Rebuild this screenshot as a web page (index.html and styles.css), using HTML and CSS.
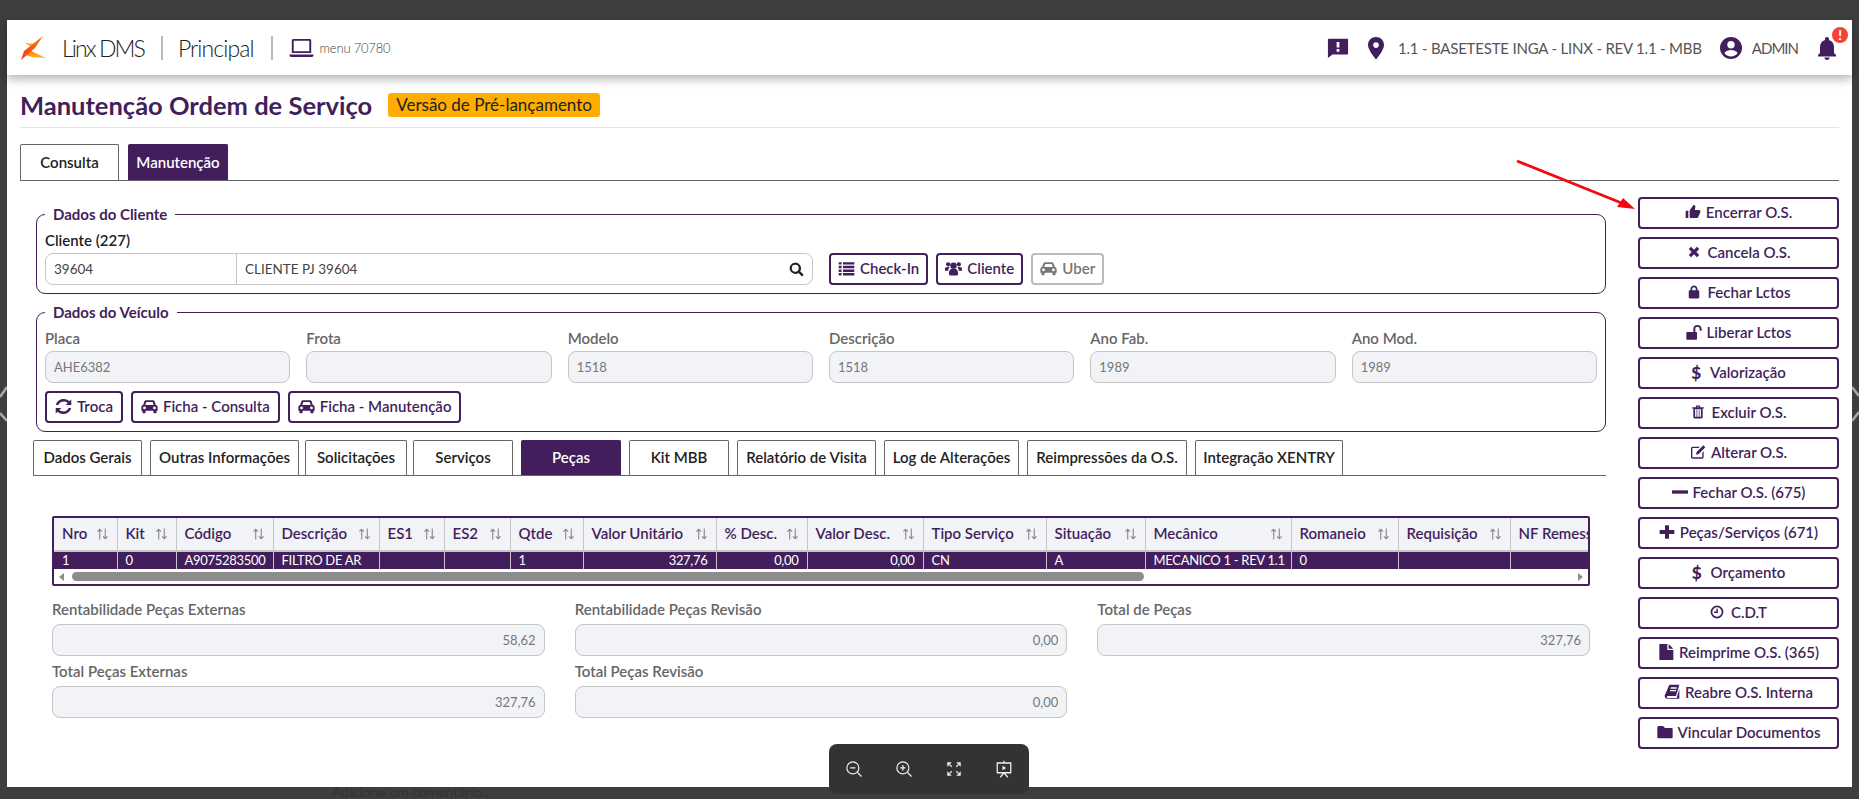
FILE: index.html
```html
<!DOCTYPE html>
<html lang="pt-BR">
  <head>
    <meta charset="UTF-8" />
    <title>Manutenção Ordem de Serviço</title>
    <link rel="stylesheet" href="styles.css">
  </head>
  <body>
    <svg class="sprite" xmlns="http://www.w3.org/2000/svg">
      <symbol id="i-thumb" viewBox="0 0 24 24"><path d="M1 21h4V10H1v11zm22-10c0-1.1-.9-2-2-2h-6.3l.9-4.6c.2-1.300-.9-2.900-2.600-3.400L7.600 8.600C7.200 9 7 9.500 7 10v9c0 1.100.9 2 2 2h9c.8 0 1.500-.5 1.800-1.200l3-7c.1-.3.2-.5.2-.8v-1z"/></symbol>
      <symbol id="i-close" viewBox="0 0 24 24"><path d="M7 3l5 5 5-5 4 4-5 5 5 5-4 4-5-5-5 5-4-4 5-5-5-5z"/></symbol>
      <symbol id="i-lock" viewBox="0 0 24 24"><path d="M19 9h-1V7c0-3.300-2.700-6-6-6S6 3.700 6 7v2H5c-1.100 0-2 .9-2 2v10c0 1.100.9 2 2 2h14c1.100 0 2-.9 2-2V11c0-1.100-.9-2-2-2zM9 7c0-1.700 1.300-3 3-3s3 1.300 3 3v2H9V7z"/></symbol>
      <symbol id="i-unlock" viewBox="0 0 24 24"><path d="M2 12h13c.8 0 1.500.7 1.500 1.500V22c0 .8-.7 1.500-1.500 1.500H2c-.8 0-1.500-.7-1.500-1.500v-8.500C.5 12.700 1.200 12 2 12zM11 12V7.500C11 4 13.500 1.500 17 1.500S23.500 4 23.500 7.500V10h-3V7.500c0-2-1.500-3.200-3.500-3.200S14 5.500 14 7.500V12z"/></symbol>
      <symbol id="i-trash" viewBox="0 0 24 24"><path d="M9 1h6l1 3h6v2h-2v15c0 1.100-.9 2-2 2H6c-1.100 0-2-.9-2-2V6H2V4h6l1-3zm1.500 2l-.4 1h3.800l-.4-1h-3zM7 7v13h2.500V7H7zm3.700 0v13h2.600V7h-2.600zm3.800 0v13H17V7h-2.500z" fill-rule="evenodd"/></symbol>
      <symbol id="i-edit" viewBox="0 0 24 24"><path d="M4 4h11l-2 2H4.500C4 6 3.500 6.500 3.500 7v12c0 .5.5 1 1 1h13c.5 0 1-.5 1-1v-6l2-2v8.500c0 1.400-1.100 2.500-2.500 2.500H4c-1.400 0-2.500-1.100-2.500-2.500v-13C1.500 5.100 2.600 4 4 4z"/><path d="M20 2l3 3-10 10-4 1 1-4z"/></symbol>
      <symbol id="i-minus" viewBox="0 0 24 24"><path d="M0 9.500h24v5H0z"/></symbol>
      <symbol id="i-plus" viewBox="0 0 24 24"><path d="M9 2h6v7h8v6h-8v7H9v-7H1V9h8z"/></symbol>
      <symbol id="i-clock" viewBox="0 0 24 24"><path d="M12 1a11 11 0 1 0 0 22 11 11 0 0 0 0-22zm0 3a8 8 0 1 1 0 16 8 8 0 0 1 0-16z" fill-rule="evenodd"/><path d="M11 6.500h2.500v7H7v-2.500h4z"/></symbol>
      <symbol id="i-file" viewBox="0 0 24 24"><path d="M2 0h12v9h9v15H2zM16 0l7 7h-7z"/></symbol>
      <symbol id="i-book" viewBox="0 0 24 24"><path d="M8 1h15l-5 17H6c-1 0-1.800.8-1.800 1.600S5 21 6 21h13l4-14v15H5c-2.500 0-4-1.700-4-3.500 0-.5 0-1 .2-1.500zm2 4v2h9V5zm-1 4v2h9V9z" fill-rule="evenodd"/></symbol>
      <symbol id="i-folder" viewBox="0 0 24 24"><path d="M3 3h6l3 3h10c.8 0 1.500.7 1.500 1.500V20c0 .8-.7 1.500-1.500 1.500H2C1.200 21.500.5 20.800.5 20V5.500C.5 4 1.500 3 3 3z"/></symbol>
      <symbol id="i-list" viewBox="0 0 24 24"><path d="M1 3h4v3.500H1zm6 0h16v3.500H7zM1 8.200h4v3.500H1zm6 0h16v3.500H7zm-6 5.200h4v3.500H1zm6 0h16v3.500H7zM1 18.500h4V22H1zm6 0h16V22H7z"/></symbol>
      <symbol id="i-users" viewBox="0 0 24 24"><circle cx="12" cy="8" r="4.500"/><circle cx="4.500" cy="6" r="3"/><circle cx="19.500" cy="6" r="3"/><path d="M7 14c1-1 3-1.500 5-1.500s4 .5 5 1.500c1 1 1.500 3 1.500 5 0 1.500-1 3-2.500 3H8c-1.500 0-2.500-1.500-2.500-3 0-2 .5-4 1.500-5zM5 10C3 10 .5 10 0 12v3h4.500c.2-2 1-4 2-5zM19 10c2 0 4.500 0 5 2v3h-4.500c-.2-2-1-4-2-5z"/></symbol>
      <symbol id="i-car" viewBox="0 0 24 24"><path d="M7 3h10c1 0 1.800.6 2.200 1.500L21 10c1.500.5 2.500 1.700 2.500 3.200V18h-1.500v2c0 .8-.7 1.500-1.500 1.500H19c-.8 0-1.500-.7-1.500-1.500v-2h-11v2c0 .8-.7 1.500-1.500 1.500H3.500C2.700 21.500 2 20.800 2 20v-2H.5v-4.800C.5 11.700 1.500 10.500 3 10l1.800-5.500C5.200 3.600 6 3 7 3zm.5 2.500L6 10h12l-1.500-4.500zM5 12a2 2 0 1 0 0 4 2 2 0 0 0 0-4zm14 0a2 2 0 1 0 0 4 2 2 0 0 0 0-4z" fill-rule="evenodd"/></symbol>
      <symbol id="i-refresh" viewBox="0 0 24 24"><path d="M23 2v8h-8l3-3c-1.600-1.400-3.700-2-6-2-3.300 0-6 2-7.200 5H1.200C2.500 5 6.800 1.500 12 1.500c3.200 0 6 1.100 8.300 3.200zM1 22v-8h8l-3 3c1.600 1.400 3.700 2 6 2 3.300 0 6-2 7.200-5h3.600c-1.300 5-5.600 8.500-10.800 8.500-3.200 0-6-1.100-8.300-3.200z"/></symbol>
      <symbol id="i-search" viewBox="0 0 24 24"><path d="M10 1a9 9 0 1 0 5.200 16.400l5.600 5.600 2.700-2.700-5.600-5.600A9 9 0 0 0 10 1zm0 3.500a5.500 5.500 0 1 1 0 11 5.500 5.500 0 0 1 0-11z" fill-rule="evenodd"/></symbol>
      <symbol id="i-alert" viewBox="0 0 24 24"><path d="M2 2h20c.6 0 1 .4 1 1v15c0 .6-.4 1-1 1H6l-5 4V3c0-.6.4-1 1-1zm8.500 3.500v6h3v-6zm0 7.500v3h3v-3z" fill-rule="evenodd"/></symbol>
      <symbol id="i-pin" viewBox="0 0 24 24"><path d="M12 1C7.500 1 4 4.500 4 9c0 5.500 8 14.500 8 14.500S20 14.500 20 9c0-4.500-3.500-8-8-8zm0 5.300a2.800 2.800 0 1 1 0 5.600 2.800 2.800 0 0 1 0-5.600z" fill-rule="evenodd"/></symbol>
      <symbol id="i-user" viewBox="0 0 24 24"><path d="M12 1a11 11 0 1 0 0 22 11 11 0 0 0 0-22zm0 4a3.700 3.700 0 1 1 0 7.400A3.700 3.700 0 0 1 12 5zm0 15.500c-2.800 0-5.200-1.300-6.700-3.400 1.300-2 4.200-3 6.700-3s5.400 1 6.700 3c-1.500 2.100-3.900 3.400-6.700 3.400z" fill-rule="evenodd"/></symbol>
      <symbol id="i-bell" viewBox="0 0 24 24"><path d="M12 24c1.500 0 2.600-1.100 2.600-2.400H9.400C9.400 22.900 10.500 24 12 24zm7-7v-6c0-3.600-1.900-6.200-5-7V3c0-1.200-.8-2-2-2s-2 .8-2 2v1c-3.100.8-5 3.400-5 7v6l-2 2v1.500h18V19z"/></symbol>
      <symbol id="i-laptop" viewBox="0 0 24 24"><path d="M4 3h16c1 0 1.700.7 1.700 1.700V17H2.300V4.700C2.300 3.700 3 3 4 3zm.2 1.800v10.400h15.600V4.800zM0 18.500h24v.8c0 1-.7 1.700-1.700 1.700H1.700C.7 21 0 20.300 0 19.300z" fill-rule="evenodd"/></symbol>
      <symbol id="i-sort" viewBox="0 0 14 14"><path d="M4 13V2M1.500 4.500L4 2l2.500 2.500M10 1v11M7.500 9.500L10 12l2.500-2.500" fill="none" stroke="currentColor" stroke-width="1.200"/></symbol>
      <symbol id="i-zoomout" viewBox="0 0 24 24"><circle cx="10.500" cy="10.500" r="8" fill="none" stroke="currentColor" stroke-width="1.600"/><path d="M16.500 16.500L22 22M7 10.500h7" fill="none" stroke="currentColor" stroke-width="1.800"/></symbol>
      <symbol id="i-zoomin" viewBox="0 0 24 24"><circle cx="10.500" cy="10.500" r="8" fill="none" stroke="currentColor" stroke-width="1.600"/><path d="M16.500 16.500L22 22M7 10.500h7M10.500 7v7" fill="none" stroke="currentColor" stroke-width="1.800"/></symbol>
      <symbol id="i-expand" viewBox="0 0 24 24"><path d="M3 3h6L3 9zM21 3h-6l6 6zM3 21h6l-6-6zM21 21h-6l6-6z" fill="currentColor"/><path d="M6 6l3 3M18 6l-3 3M6 18l3-3M18 18l-3-3" stroke="currentColor" stroke-width="1.500"/></symbol>
      <symbol id="i-slides" viewBox="0 0 24 24"><path d="M3 4h18v13H3zM12 1v3M12 17l-5 6M12 17l5 6" fill="none" stroke="currentColor" stroke-width="1.700"/><path d="M10 7.500l5 3-5 3z" fill="currentColor"/></symbol>
    </svg>

    <div class="panel">
      <header class="topbar">
        <svg class="logo" viewBox="0 0 26 24">
          <defs>
            <linearGradient id="logo-fill" x1="0" y1="1" x2="1" y2="0"><stop offset="0" stop-color="#f03a17"/><stop offset="1" stop-color="#ff7a10"/></linearGradient>
            <linearGradient id="logo-foot" x1="0" y1="0" x2="1" y2="1"><stop offset="0" stop-color="#ff7a10"/><stop offset="1" stop-color="#ffc31f"/></linearGradient>
          </defs>
          <path fill="#ffae1c" d="M5 7l12 1-4 4z"/>
          <path fill="url(#logo-foot)" d="M9 14l17 8-13-.8-8-2.200z"/>
          <path fill="url(#logo-fill)" d="M23 0L15 12 1 24l3-9z"/>
        </svg>
        <span class="brand linx">Linx DMS</span>
        <span class="brand-sep"></span>
        <span class="brand">Principal</span>
        <span class="brand-sep"></span>
        <svg class="laptop"><use href="#i-laptop"/></svg>
        <span class="menu-code">menu 70780</span>
        <div class="topbar-right">
          <svg class="top-icon alert-icon"><use href="#i-alert"/></svg>
          <svg class="top-icon pin-icon"><use href="#i-pin"/></svg>
          <span class="base-name">1.1 - BASETESTE INGA - LINX - REV 1.1 - MBB</span>
          <svg class="top-icon user-icon"><use href="#i-user"/></svg>
          <span class="base-name user-name">ADMIN</span>
          <span class="bell">
            <svg class="top-icon"><use href="#i-bell"/></svg>
            <span class="bell-count">!</span>
          </span>
        </div>
      </header>

      <div class="content">
        <div class="page-title">
          <h1>Manutenção Ordem de Serviço</h1>
          <span class="pre-release">Versão de Pré-lançamento</span>
        </div>

        <div class="main-tabs">
          <button class="main-tab">Consulta</button>
          <button class="main-tab active">Manutenção</button>
        </div>

        <div class="work">
          <div class="work-left">
            <fieldset class="group">
              <legend>Dados do Cliente</legend>
              <label class="field-label dark">Cliente (227)</label>
              <div class="client-row">
                <div class="lookup">
                  <input class="lookup-code" value="39604" readonly />
                  <input class="lookup-name" value="CLIENTE PJ 39604" readonly />
                  <svg class="lookup-icon"><use href="#i-search"/></svg>
                </div>
                <button class="btn"><svg class="ico"><use href="#i-list"/></svg>Check-In</button>
                <button class="btn"><svg class="ico"><use href="#i-users"/></svg>Cliente</button>
                <button class="btn off"><svg class="ico"><use href="#i-car"/></svg>Uber</button>
              </div>
            </fieldset>

            <fieldset class="group vehicle">
              <legend>Dados do Veículo</legend>
              <div class="vehicle-grid">
                <div><label class="field-label">Placa</label><input class="field" value="AHE6382" readonly /></div>
                <div><label class="field-label">Frota</label><input class="field" readonly /></div>
                <div><label class="field-label">Modelo</label><input class="field" value="1518" readonly /></div>
                <div><label class="field-label">Descrição</label><input class="field" value="1518" readonly /></div>
                <div><label class="field-label">Ano Fab.</label><input class="field" value="1989" readonly /></div>
                <div><label class="field-label">Ano Mod.</label><input class="field" value="1989" readonly /></div>
              </div>
              <div class="vehicle-actions">
                <button class="btn"><svg class="ico"><use href="#i-refresh"/></svg>Troca</button>
                <button class="btn"><svg class="ico"><use href="#i-car"/></svg>Ficha - Consulta</button>
                <button class="btn"><svg class="ico"><use href="#i-car"/></svg>Ficha - Manutenção</button>
              </div>
            </fieldset>

            <div class="sub-tabs">
              <button class="sub-tab">Dados Gerais</button>
              <button class="sub-tab">Outras Informações</button>
              <button class="sub-tab">Solicitações</button>
              <button class="sub-tab">Serviços</button>
              <button class="sub-tab active">Peças</button>
              <button class="sub-tab">Kit MBB</button>
              <button class="sub-tab">Relatório de Visita</button>
              <button class="sub-tab">Log de Alterações</button>
              <button class="sub-tab">Reimpressões da O.S.</button>
              <button class="sub-tab">Integração XENTRY</button>
            </div>

            <div class="grid-box">
              <table class="grid">
                <colgroup>
                  <col class="c-63" /><col class="c-59" /><col class="c-97" /><col class="c-106" /><col class="c-65" />
                  <col class="c-66" /><col class="c-73" /><col class="c-133" /><col class="c-91" /><col class="c-116" />
                  <col class="c-123" /><col class="c-99" /><col class="c-146" /><col class="c-107" /><col class="c-112" /><col class="c-90" />
                </colgroup>
                <thead>
                  <tr>
                    <th>Nro<svg class="sort"><use href="#i-sort"/></svg></th>
                    <th>Kit<svg class="sort"><use href="#i-sort"/></svg></th>
                    <th>Código<svg class="sort"><use href="#i-sort"/></svg></th>
                    <th>Descrição<svg class="sort"><use href="#i-sort"/></svg></th>
                    <th>ES1<svg class="sort"><use href="#i-sort"/></svg></th>
                    <th>ES2<svg class="sort"><use href="#i-sort"/></svg></th>
                    <th>Qtde<svg class="sort"><use href="#i-sort"/></svg></th>
                    <th>Valor Unitário<svg class="sort"><use href="#i-sort"/></svg></th>
                    <th>% Desc.<svg class="sort"><use href="#i-sort"/></svg></th>
                    <th>Valor Desc.<svg class="sort"><use href="#i-sort"/></svg></th>
                    <th>Tipo Serviço<svg class="sort"><use href="#i-sort"/></svg></th>
                    <th>Situação<svg class="sort"><use href="#i-sort"/></svg></th>
                    <th>Mecânico<svg class="sort"><use href="#i-sort"/></svg></th>
                    <th>Romaneio<svg class="sort"><use href="#i-sort"/></svg></th>
                    <th>Requisição<svg class="sort"><use href="#i-sort"/></svg></th>
                    <th>NF Remessa</th>
                  </tr>
                </thead>
                <tbody>
                  <tr>
                    <td>1</td><td>0</td><td>A9075283500</td><td>FILTRO DE AR</td><td></td><td></td><td>1</td>
                    <td class="num">327,76</td><td class="num">0,00</td><td class="num">0,00</td>
                    <td>CN</td><td>A</td><td>MECANICO 1 - REV 1.1</td><td>0</td><td></td><td></td>
                  </tr>
                </tbody>
              </table>
              <div class="hscroll">
                <span class="arrow-left"></span>
                <span class="thumb"></span>
                <span class="arrow-right"></span>
              </div>
            </div>

            <div class="totals">
              <div><label class="field-label">Rentabilidade Peças Externas</label><input class="field num" value="58,62" readonly /></div>
              <div><label class="field-label">Rentabilidade Peças Revisão</label><input class="field num" value="0,00" readonly /></div>
              <div><label class="field-label">Total de Peças</label><input class="field num" value="327,76" readonly /></div>
              <div><label class="field-label">Total Peças Externas</label><input class="field num" value="327,76" readonly /></div>
              <div><label class="field-label">Total Peças Revisão</label><input class="field num" value="0,00" readonly /></div>
            </div>
          </div>

          <aside class="actions">
            <button class="btn"><svg class="ico"><use href="#i-thumb"/></svg>Encerrar O.S.</button>
            <button class="btn"><svg class="ico small"><use href="#i-close"/></svg>Cancela O.S.</button>
            <button class="btn"><svg class="ico small"><use href="#i-lock"/></svg>Fechar Lctos</button>
            <button class="btn"><svg class="ico"><use href="#i-unlock"/></svg>Liberar Lctos</button>
            <button class="btn"><span class="dollar">$</span>Valorização</button>
            <button class="btn"><svg class="ico small"><use href="#i-trash"/></svg>Excluir O.S.</button>
            <button class="btn"><svg class="ico"><use href="#i-edit"/></svg>Alterar O.S.</button>
            <button class="btn"><svg class="ico"><use href="#i-minus"/></svg>Fechar O.S. (675)</button>
            <button class="btn"><svg class="ico"><use href="#i-plus"/></svg>Peças/Serviços (671)</button>
            <button class="btn"><span class="dollar">$</span>Orçamento</button>
            <button class="btn"><svg class="ico small"><use href="#i-clock"/></svg>C.D.T</button>
            <button class="btn"><svg class="ico"><use href="#i-file"/></svg>Reimprime O.S. (365)</button>
            <button class="btn"><svg class="ico"><use href="#i-book"/></svg>Reabre O.S. Interna</button>
            <button class="btn"><svg class="ico"><use href="#i-folder"/></svg>Vincular Documentos</button>
          </aside>
        </div>
      </div>

      <svg class="red-arrow" viewBox="0 0 130 60">
        <path d="M7 6L114 49" stroke="#f5080f" stroke-width="2.800"/>
        <path d="M125 54L113 43 107 52z" fill="#f5080f"/>
      </svg>

      <div class="viewer-bar">
        <svg><use href="#i-zoomout"/></svg>
        <svg><use href="#i-zoomin"/></svg>
        <svg><use href="#i-expand"/></svg>
        <svg><use href="#i-slides"/></svg>
      </div>
    </div>

    <div class="behind">Adicione um comentário...</div>
    <svg class="chevron left" viewBox="0 0 7 36"><path d="M7 1L0 11M7 35L0 27"/></svg>
    <svg class="chevron right" viewBox="0 0 7 36"><path d="M0 1l7 9M0 35l7-9"/></svg>
  </body>
</html>
```

FILE: styles.css
```css
* {
  box-sizing: border-box;
}

body {
  margin: 0;
  height: 100vh;
  padding: 20px 7px 0;
  overflow: hidden;
  position: relative;
  background: #3e3e3e;
  font-family: "Lato", "Open Sans", sans-serif;
  color: #421f5c;
}

button,
input {
  font-family: inherit;
}

.sprite {
  display: none;
}

.panel {
  position: relative;
  height: 767px;
  background: #fff;
}

.topbar {
  display: flex;
  align-items: center;
  height: 55px;
  padding: 0 13px;
  background: #fff;
  box-shadow: 0 4px 9px rgba(0, 0, 0, 0.3);
}

.logo {
  width: 26px;
  height: 24px;
  margin-right: 16px;
}

.brand {
  font-size: 23px;
  font-weight: 300;
  letter-spacing: -0.9px;
  color: #222;
}

.brand.linx {
  letter-spacing: -1.9px;
}

.brand-sep {
  width: 2px;
  height: 24px;
  margin: 0 15px 0 17px;
  background: #bbb;
}

.laptop {
  width: 27px;
  height: 24px;
  margin-right: 5px;
  fill: #421f5c;
}

.menu-code {
  font-size: 13px;
  font-weight: 300;
  letter-spacing: -0.2px;
  color: #444;
}

.topbar-right {
  display: flex;
  align-items: center;
  margin-left: auto;
}

.top-icon {
  display: block;
  width: 24px;
  height: 24px;
  fill: #421f5c;
}

.alert-icon {
  width: 22px;
}

.pin-icon {
  margin-left: 15px;
  margin-right: 10px;
}

.base-name {
  font-size: 15px;
  letter-spacing: -0.2px;
  color: #555;
}

.user-name {
  letter-spacing: -1px;
}

.user-icon {
  margin-left: 17px;
  margin-right: 9px;
}

.bell {
  position: relative;
  margin-left: 17px;
}

.bell-count {
  position: absolute;
  top: -9px;
  right: -9px;
  width: 16px;
  height: 16px;
  border-radius: 50%;
  background: #f44336;
  color: #fff;
  font-size: 13px;
  font-weight: 900;
  line-height: 16px;
  text-align: center;
}

.content {
  padding: 0 13px;
}

.page-title {
  display: flex;
  align-items: center;
  gap: 16px;
  height: 53px;
  padding-top: 7px;
  border-bottom: 1px solid #e3e3e3;
}

h1 {
  margin: 0;
  font-size: 25.500px;
  font-weight: 700;
  color: #421f5c;
}

.pre-release {
  padding: 0 8px;
  height: 24px;
  border-radius: 3px;
  background: #ffad00;
  color: #222;
  font-size: 17px;
  line-height: 24px;
}

.main-tabs {
  display: flex;
  gap: 9px;
  height: 37px;
  margin-top: 16px;
  border-bottom: 1px solid #666;
}

.main-tab {
  width: 99px;
  height: 36px;
  padding: 0 0 2px;
  border: 1px solid #666;
  border-bottom: none;
  border-radius: 2px 2px 0 0;
  background: #fff;
  color: #222;
  font-size: 15px;
  font-weight: 600;
}

.main-tab.active {
  width: 100px;
  border-color: #421f5c;
  background: #421f5c;
  color: #fff;
}

.work {
  display: flex;
}

.work-left {
  flex: 1;
  min-width: 0;
  padding: 24px 32px 0 16px;
}

.group {
  margin: 0;
  padding: 7px 8px 8px;
  border: 1px solid #421f5c;
  border-radius: 9px;
}

.group legend {
  padding: 0 8px;
  margin-left: 0;
  font-size: 15px;
  font-weight: 700;
  line-height: 18px;
  color: #421f5c;
}

.group.vehicle {
  margin-top: 9px;
}

.field-label {
  display: block;
  height: 20px;
  margin-bottom: 3px;
  font-size: 15px;
  font-weight: 600;
  line-height: 20px;
  white-space: nowrap;
  color: #666;
}

.field-label.dark {
  color: #222;
}

.client-row {
  display: flex;
  gap: 8px;
}

.lookup {
  display: flex;
  align-items: center;
  width: 768px;
  height: 32px;
  margin-right: 8px;
  padding-right: 8px;
  border: 1px solid #c5c5c5;
  border-radius: 8px;
}

.lookup input {
  height: 30px;
  padding: 0 8px;
  border: none;
  outline: none;
  background: transparent;
  font-size: 13.500px;
  color: #444;
}

.lookup .lookup-code {
  width: 191px;
  border-right: 1px solid #c5c5c5;
}

.lookup-name {
  flex: 1;
  min-width: 0;
}

.lookup-icon {
  width: 15px;
  height: 15px;
  fill: #222;
}

.btn {
  display: inline-flex;
  align-items: center;
  justify-content: center;
  height: 32px;
  padding: 0 7px 2px;
  border: 2px solid #421f5c;
  border-radius: 4px;
  background: #fff;
  color: #421f5c;
  font-size: 15px;
  font-weight: 600;
  white-space: nowrap;
}

.btn.off {
  border-color: #bbb;
  color: #777;
}

.ico {
  width: 16px;
  height: 16px;
  margin-right: 5px;
  fill: currentColor;
}

.ico.small {
  width: 14px;
  height: 14px;
  margin-right: 7px;
}

.group .btn {
  padding: 0 8px 2px;
}

.group .ico {
  width: 17px;
  height: 17px;
}

.client-row .btn {
  padding: 0 7px 2px;
}

.dollar {
  margin-right: 9px;
  font-size: 17px;
  font-weight: 900;
}

.vehicle-grid {
  display: grid;
  grid-template-columns: repeat(6, 1fr);
  gap: 16px;
}

.field {
  display: block;
  width: 100%;
  height: 32px;
  padding: 0 8px;
  border: 1px solid #c5c5c5;
  border-radius: 8px;
  outline: none;
  background: #f2f3f7;
  font-size: 13px;
  color: #777;
}

.field.num {
  text-align: right;
}

.vehicle-actions {
  display: flex;
  gap: 8px;
  margin-top: 8px;
}

.sub-tabs {
  display: flex;
  gap: 8px;
  height: 36px;
  margin: 8px 0 0 -3px;
  border-bottom: 1px solid #666;
}

.sub-tab {
  width: 100px;
  height: 35px;
  padding: 0 0 2px;
  border: 1px solid #666;
  border-bottom: none;
  border-radius: 2px 2px 0 0;
  background: #fff;
  color: #222;
  font-size: 15px;
  font-weight: 600;
  white-space: nowrap;
}

.sub-tab:nth-child(1) { width: 109px; }
.sub-tab:nth-child(2) { width: 149px; }
.sub-tab:nth-child(3) { width: 102px; margin-left: -2px; }
.sub-tab:nth-child(4) { margin-left: -2px; }
.sub-tab:nth-child(7) { width: 139px; }
.sub-tab:nth-child(8) { width: 135px; }
.sub-tab:nth-child(9) { width: 160px; }
.sub-tab:nth-child(10) { width: 148px; }

.sub-tab.active {
  border-color: #421f5c;
  background: #421f5c;
  color: #fff;
}

.grid-box {
  margin: 40px 16px 0 16px;
  border: 2px solid #421f5c;
  border-radius: 2px;
  overflow: hidden;
}

.grid {
  table-layout: fixed;
  width: 1546px;
  border-collapse: collapse;
}

.c-59 { width: 59px; }
.c-63 { width: 63px; }
.c-65 { width: 65px; }
.c-66 { width: 66px; }
.c-73 { width: 73px; }
.c-90 { width: 90px; }
.c-91 { width: 91px; }
.c-97 { width: 97px; }
.c-99 { width: 99px; }
.c-106 { width: 106px; }
.c-107 { width: 107px; }
.c-112 { width: 112px; }
.c-116 { width: 116px; }
.c-123 { width: 123px; }
.c-133 { width: 133px; }
.c-146 { width: 146px; }

.grid th {
  height: 33px;
  padding: 0 8px 2px;
  border-right: 1px solid #c5c5c5;
  border-bottom: 2px solid #c5c5c5;
  background: #f2f3f7;
  color: #421f5c;
  font-size: 15px;
  font-weight: 600;
  text-align: left;
  white-space: nowrap;
  overflow: hidden;
}

.sort {
  float: right;
  width: 13px;
  height: 14px;
  margin-top: 3px;
  color: #8a8a8a;
}

.grid td {
  height: 18px;
  padding: 0 8px;
  border-right: 1px solid #c9c3cf;
  background: #421f5c;
  color: #fff;
  font-size: 13px;
  letter-spacing: -0.3px;
  line-height: 17px;
  white-space: nowrap;
  overflow: hidden;
}

.grid td.num {
  text-align: right;
}

.hscroll {
  display: flex;
  align-items: center;
  height: 15px;
  padding: 0 5px;
  background: #fff;
}

.arrow-left {
  border: 4px solid transparent;
  border-right: 5px solid #8c8c8c;
  border-left: none;
}

.arrow-right {
  margin-left: auto;
  border: 4px solid transparent;
  border-left: 5px solid #8c8c8c;
  border-right: none;
}

.thumb {
  width: 1072px;
  height: 9px;
  margin-left: 8px;
  border-radius: 5px;
  background: #8c8c8c;
}

.totals {
  display: grid;
  grid-template-columns: repeat(3, 1fr);
  gap: 7px 30px;
  margin: 15px 16px 0 16px;
}

.totals .field-label {
  line-height: 17px;
}

.actions {
  display: flex;
  flex-direction: column;
  gap: 8px;
  width: 201px;
  padding-top: 16px;
}

.red-arrow {
  position: absolute;
  left: 1503px;
  top: 135px;
  width: 130px;
  height: 60px;
}

.viewer-bar {
  position: absolute;
  left: 822px;
  top: 724px;
  display: flex;
  align-items: center;
  width: 200px;
  height: 50px;
  border-radius: 8px;
  background: #333;
  color: #eee;
}

.viewer-bar svg {
  width: 18px;
  height: 18px;
  margin: 0 16px;
}

.behind {
  height: 12px;
  padding-left: 325px;
  font-size: 14px;
  line-height: 10px;
  color: #333;
}

.chevron {
  position: absolute;
  top: 386px;
  width: 7px;
  height: 36px;
  fill: none;
  stroke: #aaa;
  stroke-width: 2.500;
}

.chevron.left {
  left: 0;
}

.chevron.right {
  right: 0;
}
```
